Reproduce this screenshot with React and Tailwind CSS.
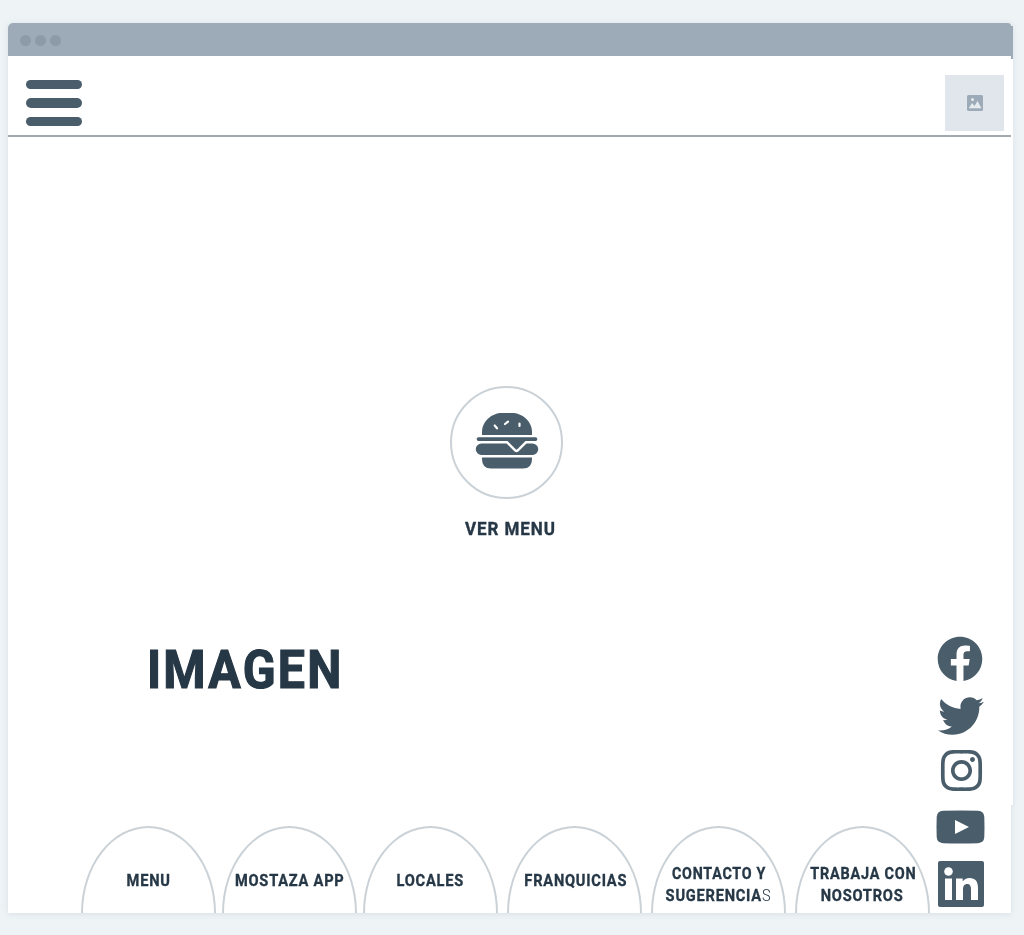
import React from "react";
import { FaFacebook, FaTwitter, FaInstagram } from "react-icons/fa";

function Burger() {
  return (
    <svg className="mb-[5px] h-[57px] w-[64px]" viewBox="0 0 64 57" fill="#4a5d6b">
      <path d="M7 23V20C7 9 17 1 27 1H37C47 1 57 9 57 20V23Z" />
      <path d="M3.500 25.200H60.500A1.700 1.700 0 0 1 60.500 28.900H50.500L42.500 37Q41.500 38 40.500 37L32.500 28.900H3.500A1.700 1.700 0 0 1 3.500 25.200Z" />
      <path d="M6.500 31.500H31.500L39.600 39.400Q41.500 41 43.400 39.400L51.500 31.500H57.500A5.700 5.700 0 0 1 57.500 43H6.500A5.700 5.700 0 0 1 6.500 31.500Z" />
      <path d="M7 45.500H57V47Q57 56.500 48 56.500H16Q7 56.500 7 47Z" />
      <path d="M19.700 13.500L22 16.300M30 12L33 9.700M44.500 11.500V14" fill="none" stroke="#fff" strokeWidth="2.200" strokeLinecap="round" />
    </svg>
  );
}

function Arch({ className, children }) {
  return (
    <a className={"flex h-[87px] w-[135px] shrink-0 flex-col items-center rounded-t-[50%_100%] border-2 border-b-0 border-[#cbd2d7] text-center text-[17px] leading-[22px] font-bold tracking-[0.9px] whitespace-nowrap [-webkit-text-stroke:0.35px_#263746] " + className}>
      {children}
    </a>
  );
}

export default function App() {
  return (
    <div className="h-[935px] w-[1024px] overflow-hidden bg-[#eef3f6] pt-[23px] pl-2 font-['Roboto',sans-serif] text-[#263746]">
      <div className="flex h-[890px] w-[1005px] drop-shadow-[0_1px_3px_rgba(70,90,105,0.13)]">
        <div className="flex w-[1003px] flex-col rounded-tl-[5px] rounded-tr-[3px] bg-white">
          <div className="flex h-[33px] shrink-0 items-center gap-[4px] rounded-tl-[5px] rounded-tr-[3px] bg-[#9cabb7] pt-px pl-3">
            <span className="size-[11px] rounded-full bg-[#8b9ba8]" />
            <span className="size-[11px] rounded-full bg-[#8b9ba8]" />
            <span className="size-[11px] rounded-full bg-[#8b9ba8]" />
          </div>
          <header className="flex h-[81px] shrink-0 justify-between border-b-2 border-[#a1aab1] pr-[7px] pl-[18px]">
            <div className="flex flex-col gap-[9px] pt-[23.500px]">
              <span className="h-[9.500px] w-[56px] rounded-full bg-[#4a5d6b]" />
              <span className="h-[9.500px] w-[56px] rounded-full bg-[#4a5d6b]" />
              <span className="h-[9.500px] w-[56px] rounded-full bg-[#4a5d6b]" />
            </div>
            <div className="mt-[19px] flex h-[56px] w-[59px] items-center justify-center bg-[#e1e5ec]">
              <svg className="size-4" viewBox="0 0 16 16">
                <rect width="16" height="16" rx="1.500" fill="#9cabb7" />
                <path d="M1.800 13.200L5 8L7.500 11L10.500 6L14.500 13.200Z" fill="#e6ebf0" />
                <circle cx="5.500" cy="4.500" r="1.500" fill="#e6ebf0" />
              </svg>
            </div>
          </header>
          <main className="flex h-[776px]">
            <section className="flex w-[921px] shrink-0 flex-col">
              <div className="mt-[249px] ml-[442px] flex size-[113px] shrink-0 items-center justify-center rounded-full border-2 border-[#cbd2d7]">
                <Burger />
              </div>
              <div className="mt-[19px] ml-[432px] flex h-[24px] w-[140px] items-center justify-center text-[18.500px] font-bold tracking-[1px] whitespace-nowrap [-webkit-text-stroke:0.35px_#263746]">
                <span className="scale-x-[0.92]">VER MENU</span>
              </div>
              <h1 className="mt-[96px] ml-[139px] flex h-[64px] items-center text-[54px] leading-[64px] font-bold tracking-[2.500px] [-webkit-text-stroke:1.2px_#263746]">
                <span className="origin-left scale-x-[0.895]">IMAGEN</span>
              </h1>
              <nav className="mt-[124px] flex pl-[73px]">
                <Arch className="pt-[41px]"><span className="scale-x-[0.86]">MENU</span></Arch>
                <Arch className="ml-[6px] pt-[41px]"><span className="scale-x-[0.86]">MOSTAZA APP</span></Arch>
                <Arch className="ml-[6px] pt-[41px]"><span className="scale-x-[0.86]">LOCALES</span></Arch>
                <Arch className="ml-[9px] pt-[41px]"><span className="ml-[2px] scale-x-[0.86]">FRANQUICIAS</span></Arch>
                <Arch className="ml-[9px] pt-[34px]">
                  <span className="ml-[1px] scale-x-[0.84]">CONTACTO Y</span>
                  <span className="scale-x-[0.86]">SUGERENCIA<span className="font-light [-webkit-text-stroke:0]">S</span></span>
                </Arch>
                <Arch className="ml-[9px] pt-[34px]">
                  <span className="ml-[1px] scale-x-[0.85]">TRABAJA CON</span>
                  <span className="scale-x-[0.86]">NOSOTROS</span>
                </Arch>
              </nav>
            </section>
            <aside className="flex flex-col items-center pt-[499px] pl-[6px] text-[#4a5d6b]">
              <FaFacebook className="size-[46px]" />
              <FaTwitter className="mt-[11px] ml-[1px] size-[46px]" />
              <FaInstagram className="mt-[8px] ml-[3px] size-[47px]" />
              <svg className="mt-[16px] h-[34px] w-[49px]" viewBox="0 0 49 34">
                <path d="M7 .8Q24.500 0 42 .8Q48 1.300 48.300 7Q48.700 17 48.300 27Q48 32.700 42 33.200Q24.500 34 7 33.200Q1 32.700.7 27Q.3 17 .7 7Q1 1.300 7 .8Z" fill="currentColor" />
                <path d="M19 10V24L33 17Z" fill="#fff" />
              </svg>
              <svg className="mt-[17px] ml-[2px] size-[46px]" viewBox="0 0 46 46">
                <rect width="46" height="46" rx="2" fill="currentColor" />
                <circle cx="10.500" cy="10.500" r="4.300" fill="#fff" />
                <path d="M7 17.500H14V39H7ZM18 17.500H24.700V20.500Q27 17 31.500 17C37.500 17 40 20.500 40 27V39H33V28.500C33 25 32 23 29.300 23C26.300 23 25 25.200 25 28.500V39H18Z" fill="#fff" />
              </svg>
            </aside>
          </main>
        </div>
        <div className="flex w-[2px] flex-col">
          <div className="mt-[3px] h-[33px] bg-[#9cabb7]" />
          <div className="h-[746px] bg-white" />
        </div>
      </div>
    </div>
  );
}
